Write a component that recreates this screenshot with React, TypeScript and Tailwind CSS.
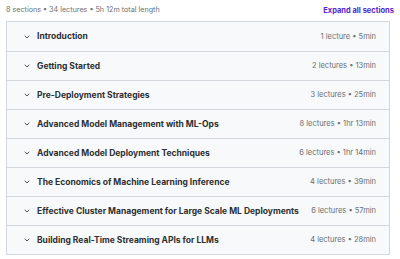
import { ChevronDown } from "lucide-react";

const sections = [
  { title: "Introduction", meta: "1 lecture • 5min" },
  { title: "Getting Started", meta: "2 lectures • 13min" },
  { title: "Pre-Deployment Strategies", meta: "3 lectures • 25min" },
  { title: "Advanced Model Management with ML-Ops", meta: "8 lectures • 1hr 13min" },
  { title: "Advanced Model Deployment Techniques", meta: "6 lectures • 1hr 14min" },
  { title: "The Economics of Machine Learning Inference", meta: "4 lectures • 39min" },
  { title: "Effective Cluster Management for Large Scale ML Deployments", meta: "6 lectures • 57min" },
  { title: "Building Real-Time Streaming APIs for LLMs", meta: "4 lectures • 28min" },
];

export default function App() {
  return (
    <div className="w-[400px] h-[259px] bg-white px-[6px] font-['Inter',sans-serif] text-[#2d2f31]">
      <div className="flex h-[21px] items-center justify-between">
        <span className="text-[7.2px] text-[#6a6f73]">8 sections • 34 lectures • 5h 12m total length</span>
        <button className="text-[7.5px] font-bold text-[#5624d0]">Expand all sections</button>
      </div>
      <div className="w-[384px] border border-[#d1d7dc]">
        {sections.map((s, i) => (
          <div
            key={s.title}
            className={
              "flex h-[29px] items-center justify-between bg-[#f7f9fa] pl-[16px] pr-[13px] " +
              (i > 0 ? "border-t border-[#d1d7dc]" : "")
            }
          >
            <div className="flex items-center gap-[6px]">
              <ChevronDown className="h-[8px] w-[8px] text-[#2d2f31]" strokeWidth={2.5} />
              <span className="text-[8.5px] font-bold">{s.title}</span>
            </div>
            <span className="text-[7.5px] text-[#6a6f73]">{s.meta}</span>
          </div>
        ))}
      </div>
    </div>
  );
}
